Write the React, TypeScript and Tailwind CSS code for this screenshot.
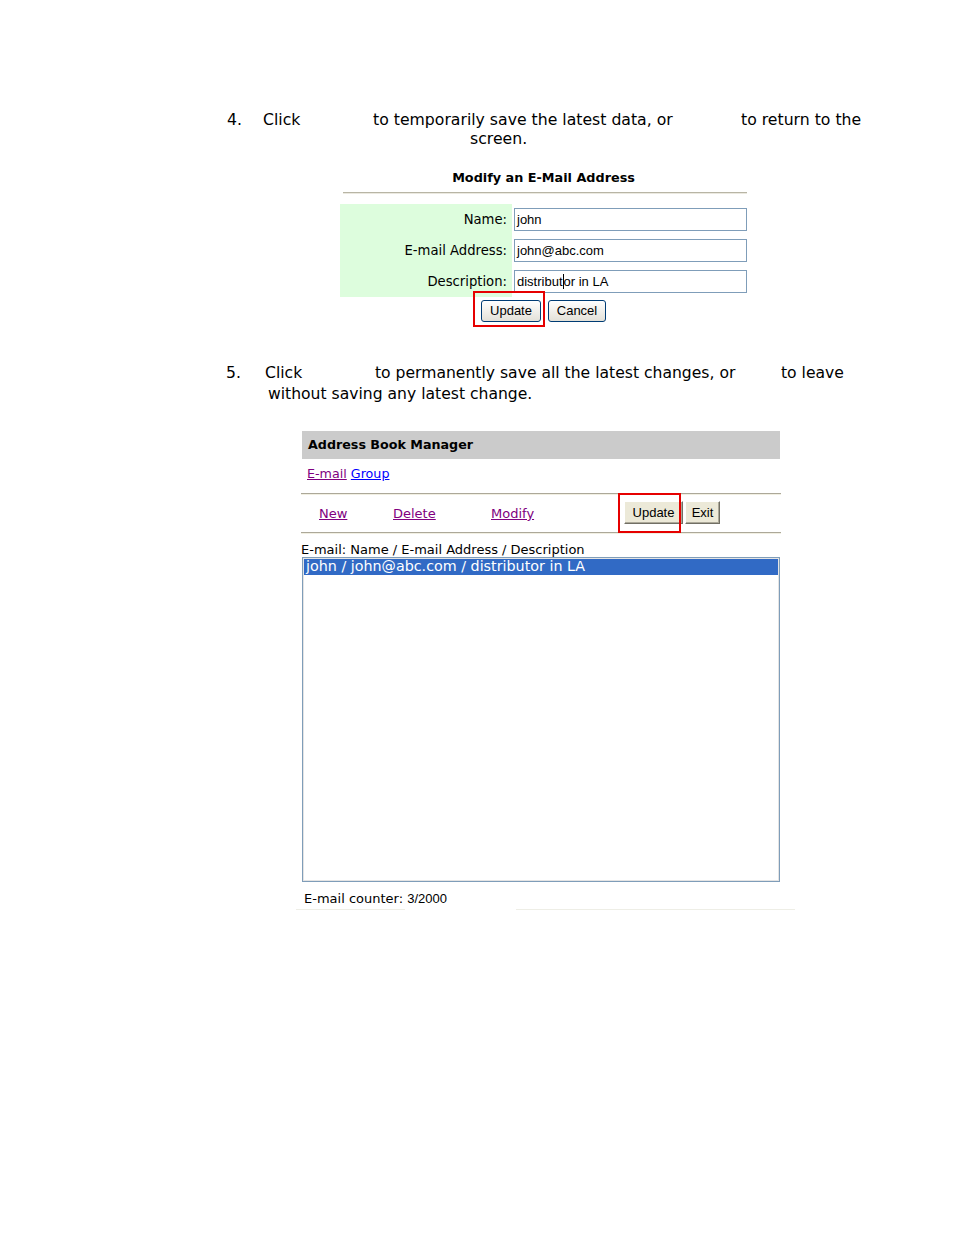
import React from 'react';

// fonts: Verdana-like body, Tahoma-like controls
const verdana = "font-['DejaVu_Sans',sans-serif]";
const tahoma = "font-['Liberation_Sans',sans-serif]";

function FormRow({ label, children }: { label: string; children: React.ReactNode }) {
    return (
        <div className="flex h-[31px]">
            <div className="flex w-[172px] shrink-0 items-center justify-end bg-[#ddfddd] pr-[5px] text-[13.2px] text-black">
                {label}
            </div>
            <div className="ml-[2px] flex items-center">
                <div className={`${tahoma} flex h-[23px] w-[233px] items-center border border-[#7f9db9] bg-white pl-[2px] text-[13px] text-black`}>
                    {children}
                </div>
            </div>
        </div>
    );
}

function XpButton({ label, width, marked }: { label: string; width: string; marked?: boolean }) {
    return (
        <div className="relative">
            <div className={`${tahoma} ${width} flex h-[22px] items-center justify-center rounded-[3px] border border-[#003c74] bg-linear-to-b from-white to-[#e3e1d8] text-[13px] text-black`}>
                {label}
            </div>
            {marked && <div className="absolute -left-[8px] -top-[9px] h-[36px] w-[72px] border-2 border-[#e60000]" />}
        </div>
    );
}

function ClassicButton({ label, width }: { label: string; width: string }) {
    return (
        <div className={`${tahoma} ${width} flex h-[23px] items-center justify-center border border-b-[#716f64] border-l-white border-r-[#716f64] border-t-white bg-[#ece9d8] text-[13px] text-black shadow-[inset_-1px_-1px_0_#aca899]`}>
            {label}
        </div>
    );
}

export default function App() {
    return (
        <div className={`${verdana} min-h-[1235px] w-[954px] bg-white text-black`}>
            {/* step 4 */}
            <div className="pt-[110px] text-[15.7px] leading-[19px]">
                <div className="flex whitespace-nowrap">
                    <span className="ml-[227px] w-[36px] shrink-0">4.</span>
                    <span className="w-[110px] shrink-0">Click</span>
                    <span className="w-[368px] shrink-0">to temporarily save the latest data, or</span>
                    <span className="shrink-0">to return to the</span>
                </div>
                <div className="pl-[470px]">screen.</div>
            </div>

            {/* modify form */}
            <div className="ml-[340px] mt-[22px] w-[407px]">
                <div className="text-center text-[12.8px] font-bold leading-[16px]">Modify an E-Mail Address</div>
                <div className="ml-[3px] mt-[6px] h-[2px] border-b border-t border-b-[#ebe9e0] border-t-[#b8b5a5]" />
                <div className="mt-[10px]">
                    <FormRow label="Name:">john</FormRow>
                    <FormRow label="E-mail Address:">john@abc.com</FormRow>
                    <FormRow label="Description:">
                        distribut
                        <span className="inline-block h-[15px] w-0 border-l border-black" />
                        or in LA
                    </FormRow>
                </div>
                <div className="mt-[3px] flex justify-center gap-[7px]">
                    <XpButton label="Update" width="w-[60px]" marked />
                    <XpButton label="Cancel" width="w-[58px]" />
                </div>
            </div>

            {/* step 5 */}
            <div className="mt-[41px] text-[15.6px] leading-[21px]">
                <div className="flex whitespace-nowrap">
                    <span className="ml-[226px] w-[39px] shrink-0">5.</span>
                    <span className="w-[110px] shrink-0">Click</span>
                    <span className="w-[406px] shrink-0">to permanently save all the latest changes, or</span>
                    <span className="shrink-0">to leave</span>
                </div>
                <div className="pl-[268px]">without saving any latest change.</div>
            </div>

            {/* address book manager */}
            <div className="ml-[301px] mt-[26px] w-[480px]">
                <div className="ml-[1px] flex h-[28px] w-[478px] items-center bg-[#cbcbcb] pl-[6px] text-[12.7px] font-bold">
                    Address Book Manager
                </div>
                <div className="h-[34px] pl-[6px] pt-[7px] text-[12.7px] leading-[16px]">
                    <span className="text-[#800080] underline">E-mail</span>{' '}
                    <span className="text-[#0000ff] underline">Group</span>
                </div>
                <div className="h-[2px] border-b border-t border-b-[#f1efe2] border-t-[#aca899]" />
                <div className="flex h-[37px] items-center pl-[18px] text-[13px]">
                    <span className="w-[74px] shrink-0 text-[#800080] underline">New</span>
                    <span className="w-[98px] shrink-0 text-[#800080] underline">Delete</span>
                    <span className="w-[133px] shrink-0 text-[#800080] underline">Modify</span>
                    <div className="relative -mt-[2px]">
                        <ClassicButton label="Update" width="w-[59px]" />
                        <div className="absolute -left-[6px] -top-[8px] h-[40px] w-[63px] border-2 border-[#e60000]" />
                    </div>
                    <div className="-mt-[2px] ml-[2px]">
                        <ClassicButton label="Exit" width="w-[35px]" />
                    </div>
                </div>
                <div className="h-[2px] border-b border-t border-b-[#f1efe2] border-t-[#aca899]" />
                <div className="mt-[8px] text-[13px] leading-[16px]">E-mail: Name / E-mail Address / Description</div>
                <div className="ml-[1px] -mt-[1px] h-[325px] w-[478px] border border-[#7f9db9] bg-white">
                    <div className="h-full border border-[#e4e4e4]">
                        <div className="h-[16px] bg-[#316ac5] pl-[2px] text-[14.3px] leading-[15px] text-white">
                            john / john@abc.com / distributor in LA
                        </div>
                    </div>
                </div>
                <div className="mt-[9px] pl-[3px] text-[13px] leading-[16px]">
                    E-mail counter: <span className={tahoma}>3/2000</span>
                </div>
            </div>
            <div className="ml-[296px] mt-[2px] flex">
                <div className="h-px w-[109px] bg-[#eeeee6]" />
                <div className="ml-[111px] h-px w-[279px] bg-[#eeeee6]" />
            </div>
        </div>
    );
}
